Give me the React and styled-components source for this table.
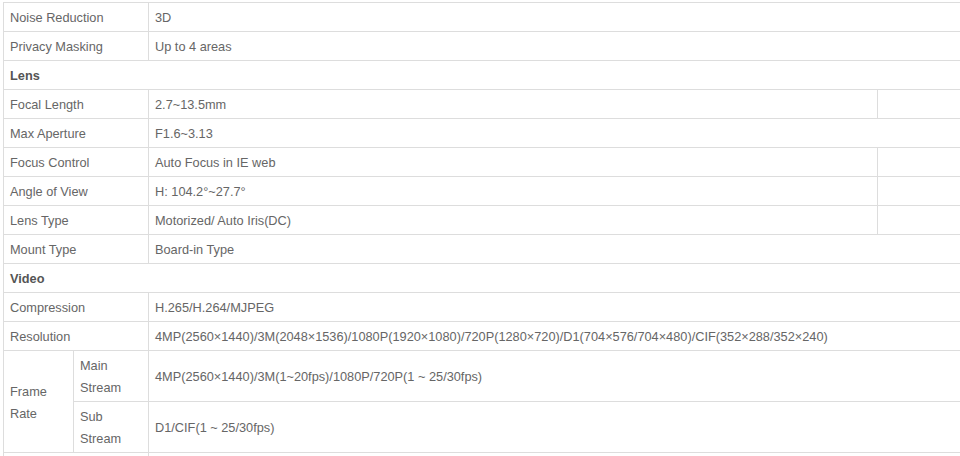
import React from 'react';
import styled, { createGlobalStyle } from 'styled-components';

const GlobalStyle = createGlobalStyle`
  html, body {
    margin: 0;
    padding: 0;
    background: #fff;
    overflow: hidden;
  }
  body {
    font-family: 'Liberation Sans', Arial, sans-serif;
  }
`;

const Page = styled.div`
  width: 960px;
  height: 456px;
  overflow: hidden;
  padding: 2px 0 0 3px;
  box-sizing: border-box;
`;

const SpecTable = styled.table`
  border-collapse: collapse;
  table-layout: fixed;
  width: 1100px;
  font-size: 12.75px;
  color: #666;
`;

const Cell = styled.td`
  border: 1px solid #ddd;
  padding: 4px 6px 2px;
  line-height: 22px;
  height: 22px;
  vertical-align: middle;
  white-space: nowrap;
  text-align: left;
`;

const SectionCell = styled(Cell)`
  font-weight: bold;
  color: #555;
`;

const specs = [
  { label: 'Noise Reduction', value: '3D' },
  { label: 'Privacy Masking', value: 'Up to 4 areas' },
  { section: 'Lens' },
  { label: 'Focal Length', value: '2.7~13.5mm', extra: true },
  { label: 'Max Aperture', value: 'F1.6~3.13' },
  { label: 'Focus Control', value: 'Auto Focus in IE web', extra: true },
  { label: 'Angle of View', value: 'H: 104.2°~27.7°', extra: true },
  { label: 'Lens Type', value: 'Motorized/ Auto Iris(DC)', extra: true },
  { label: 'Mount Type', value: 'Board-in Type' },
  { section: 'Video' },
  { label: 'Compression', value: 'H.265/H.264/MJPEG' },
  {
    label: 'Resolution',
    value:
      '4MP(2560×1440)/3M(2048×1536)/1080P(1920×1080)/720P(1280×720)/D1(704×576/704×480)/CIF(352×288/352×240)',
  },
];

const SpecRow = ({ item }) => {
  if (item.section) {
    return (
      <tr>
        <SectionCell colSpan={4}>{item.section}</SectionCell>
      </tr>
    );
  }
  return (
    <tr>
      <Cell colSpan={2}>{item.label}</Cell>
      <Cell colSpan={item.extra ? 1 : 2}>{item.value}</Cell>
      {item.extra && <Cell />}
    </tr>
  );
};

export default function App() {
  return (
    <Page>
      <GlobalStyle />
      <SpecTable>
        <colgroup>
          <col style={{ width: 70 }} />
          <col style={{ width: 75 }} />
          <col style={{ width: 729 }} />
          <col style={{ width: 226 }} />
        </colgroup>
        <tbody>
          {specs.map((item, i) => (
            <SpecRow key={i} item={item} />
          ))}
          <tr>
            <Cell rowSpan={2}>
              Frame
              <br />
              Rate
            </Cell>
            <Cell>
              Main
              <br />
              Stream
            </Cell>
            <Cell colSpan={2}>4MP(2560×1440)/3M(1~20fps)/1080P/720P(1 ~ 25/30fps)</Cell>
          </tr>
          <tr>
            <Cell>
              Sub
              <br />
              Stream
            </Cell>
            <Cell colSpan={2}>D1/CIF(1 ~ 25/30fps)</Cell>
          </tr>
          <tr>
            <Cell colSpan={2}>&nbsp;</Cell>
            <Cell colSpan={2}>&nbsp;</Cell>
          </tr>
        </tbody>
      </SpecTable>
    </Page>
  );
}
